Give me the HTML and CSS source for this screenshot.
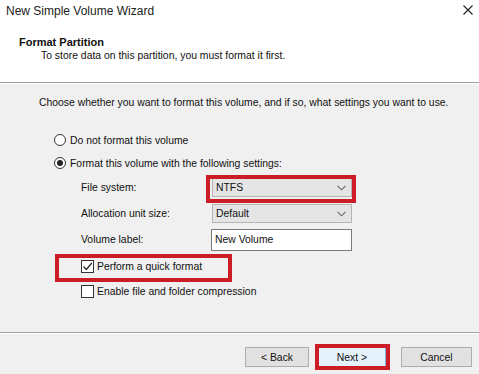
FILE: index.html
```html
<!DOCTYPE html>
<html lang="en">
<head>
    <meta charset="UTF-8">
    <title>New Simple Volume Wizard</title>
    <link rel="stylesheet" href="styles.css">
</head>
<body>
<div class="wizard">

    <div class="header">
        <div class="titlebar">
            <span class="title">New Simple Volume Wizard</span>
            <svg class="close" width="10" height="10" viewBox="0 0 10 10">
                <path d="M0.5 0.5 L9.5 9.5 M9.5 0.5 L0.5 9.5" stroke="#222" stroke-width="1.1"/>
            </svg>
        </div>
        <div class="heading">Format Partition</div>
        <div class="subheading">To store data on this partition, you must format it first.</div>
    </div>

    <div class="content">
        <p class="intro">Choose whether you want to format this volume, and if so, what settings you want to use.</p>

        <div class="options">
            <label class="choice">
                <span class="radio"></span>
                Do not format this volume
            </label>
            <label class="choice">
                <span class="radio checked"></span>
                Format this volume with the following settings:
            </label>

            <div class="settings">
                <span class="field-label">File system:</span>
                <div class="combo">
                    <span>NTFS</span>
                    <svg width="9" height="6" viewBox="0 0 9 6"><path d="M0.5 0.8 L4.5 4.8 L8.5 0.8" fill="none" stroke="#666" stroke-width="1.1"/></svg>
                </div>

                <span class="field-label">Allocation unit size:</span>
                <div class="combo">
                    <span>Default</span>
                    <svg width="9" height="6" viewBox="0 0 9 6"><path d="M0.5 0.8 L4.5 4.8 L8.5 0.8" fill="none" stroke="#666" stroke-width="1.1"/></svg>
                </div>

                <span class="field-label">Volume label:</span>
                <div class="textbox">New Volume</div>
            </div>

            <div class="checks">
                <label class="check-row">
                    <span class="checkbox">
                        <svg width="11" height="11" viewBox="0 0 11 11"><path d="M1.5 5.5 L4.3 8.5 L9.8 2" fill="none" stroke="#222" stroke-width="1.2"/></svg>
                    </span>
                    Perform a quick format
                </label>
                <label class="check-row">
                    <span class="checkbox"></span>
                    Enable file and folder compression
                </label>
            </div>
        </div>
    </div>

    <div class="footer">
        <button class="btn">&lt; Back</button>
        <button class="btn btn-default">Next &gt;</button>
        <button class="btn btn-cancel">Cancel</button>
    </div>

    <!-- red annotation boxes drawn over the dialog -->
    <div class="mark mark-fs"></div>
    <div class="mark mark-quick"></div>
    <div class="mark mark-next"></div>
</div>
</body>
</html>
```

FILE: styles.css
```css
* {
    box-sizing: border-box;
}

body {
    margin: 0;
    font-family: "Liberation Sans", Arial, sans-serif;
    font-size: 10.4px;
    color: #111;
    background-color: #f0f0f0;
}

.wizard {
    position: relative;
    width: 479px;
    height: 374px;
    overflow: hidden;
    background-color: #f0f0f0;
}

.header {
    height: 83px;
    background-color: #fff;
    border-bottom: 1px solid #a0a0a0;
    box-shadow: 0 1px 0 #fff;
}

.titlebar {
    display: flex;
    justify-content: space-between;
    align-items: center;
    height: 22px;
    padding: 0 6px 0 6px;
}

.title {
    font-size: 12px;
    color: #222;
}

.close {
    margin-top: -2px;
}

.heading {
    margin-top: 13px;
    padding-left: 19px;
    font-weight: bold;
    font-size: 11px;
    line-height: 14px;
}

.subheading {
    padding-left: 41px;
    line-height: 14px;
}

.content {
    padding: 13px 0 0 39px;
}

.intro {
    margin: 0;
    line-height: 14px;
}

.options {
    padding-left: 15px;
    margin-top: 22px;
}

.choice {
    display: flex;
    align-items: center;
    gap: 4px;
    height: 16px;
    margin-bottom: 7px;
}

.radio {
    width: 12px;
    height: 12px;
    border: 1px solid #333;
    border-radius: 50%;
    background-color: #fff;
    display: flex;
    align-items: center;
    justify-content: center;
}

.radio.checked::after {
    content: "";
    width: 6px;
    height: 6px;
    border-radius: 50%;
    background-color: #222;
}

.settings {
    display: grid;
    grid-template-columns: 131px 140px;
    grid-auto-rows: 19px;
    row-gap: 7px;
    align-items: center;
    padding-left: 27px;
    margin-top: 4px;
}

.combo {
    display: flex;
    align-items: center;
    justify-content: space-between;
    height: 19px;
    padding: 0 5px 0 3px;
    background-color: #e5e5e5;
    border: 1px solid #b4b4b4;
}

.textbox {
    display: flex;
    align-items: center;
    height: 22px;
    margin-left: -1px;
    padding-left: 3px;
    background-color: #fff;
    border: 1px solid #7a7a7a;
}

.checks {
    padding-left: 27px;
    margin-top: 9px;
}

.check-row {
    display: flex;
    align-items: center;
    gap: 3px;
    height: 16px;
    margin-bottom: 9px;
}

.checkbox {
    width: 13px;
    height: 13px;
    border: 1px solid #333;
    background-color: #fff;
    display: flex;
    align-items: center;
    justify-content: center;
}

.footer {
    position: absolute;
    left: 0;
    right: 0;
    bottom: 0;
    height: 42px;
    border-top: 1px solid #a0a0a0;
    box-shadow: inset 0 1px 0 #fff;
    display: flex;
    justify-content: flex-end;
    align-items: flex-start;
    padding: 14px 7px 0 0;
}

.btn {
    width: 64px;
    height: 20px;
    font-family: inherit;
    font-size: 10.4px;
    color: #111;
    background-color: #e1e1e1;
    border: 1px solid #adadad;
    padding: 0;
}

.btn-default {
    width: 68px;
    margin-left: 9px;
    background-color: #e5f1fb;
    border-color: #7eb4ea;
}

.btn-cancel {
    width: 71px;
    margin-left: 15px;
}

.mark {
    position: absolute;
    border: 4px solid #cc1c26;
}

.mark-fs {
    left: 206px;
    top: 175px;
    width: 150px;
    height: 28px;
}

.mark-quick {
    left: 55px;
    top: 254px;
    width: 177px;
    height: 28px;
}

.mark-next {
    left: 315px;
    top: 344px;
    width: 75px;
    height: 26px;
}
```
